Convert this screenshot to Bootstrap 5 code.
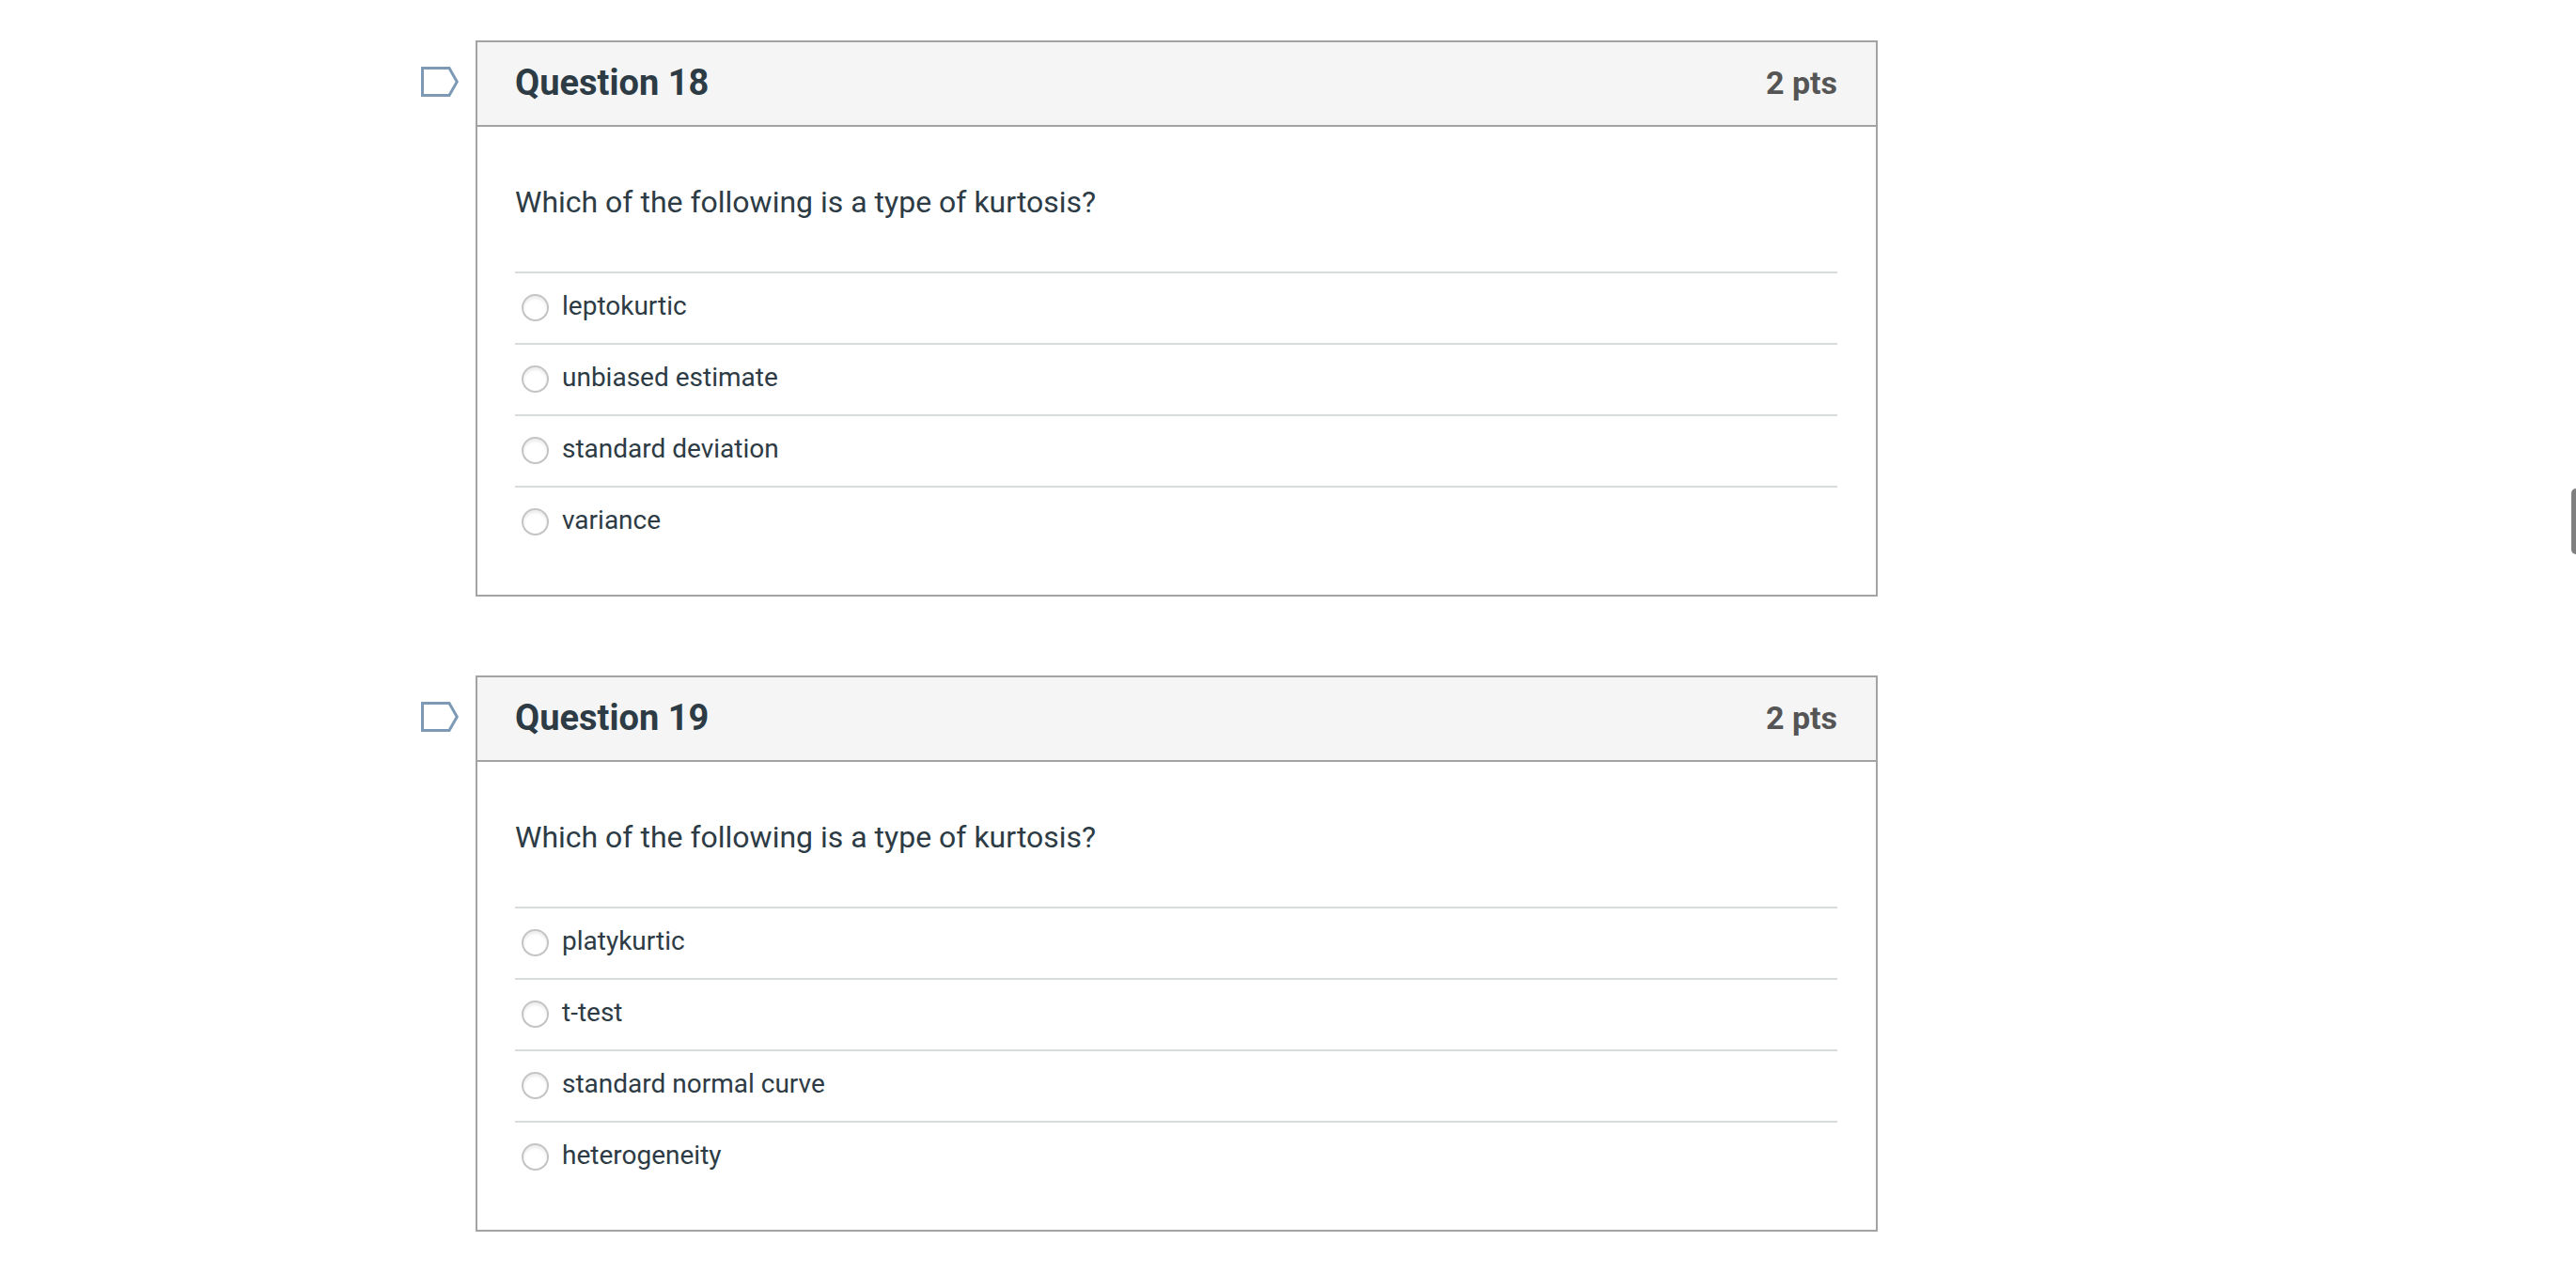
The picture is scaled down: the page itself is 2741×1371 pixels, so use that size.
<!DOCTYPE html>
<html lang="en">
<head>
    <meta charset="UTF-8">
    <meta name="viewport" content="width=device-width, initial-scale=1.0">
    <title>Quiz</title>
    <link rel="stylesheet" href="https://cdn.jsdelivr.net/npm/bootstrap@5.3.0/dist/css/bootstrap.min.css">
    <script defer src="https://cdn.jsdelivr.net/npm/bootstrap@5.3.0/dist/js/bootstrap.bundle.min.js"></script>
    <style>
        html, body {
            height: 100%;
            overflow: hidden;
        }
        body {
            background: #fff;
            color: #2d3b45;
            font-family: Roboto, "Liberation Sans", sans-serif;
        }
        .quiz-page {
            padding: 43px 0 0 448px;
            width: 1998px;
        }
        .quiz-item {
            margin-bottom: 84px;
        }
        .flag-icon {
            flex: 0 0 40px;
            width: 40px;
            height: 34px;
            margin: 27px 18px 0 0;
        }
        .quiz-box {
            height: 592px;
            border: 2px solid #a3a3a3;
            border-radius: 0;
        }
        .quiz-head {
            height: 90px;
            padding: 0 41px 0 40px;
            background: #f5f5f5;
            border-bottom: 2px solid #a3a3a3;
        }
        .quiz-title {
            font-size: 38px;
            font-weight: 700;
            margin: 0;
        }
        .quiz-pts {
            font-size: 34px;
            font-weight: 700;
            color: #555;
            padding-bottom: 2px;
        }
        .quiz-body {
            padding: 57px 41px 0 40px;
        }
        .quiz-text {
            font-size: 32px;
            line-height: 46px;
            margin: 0 0 51px;
        }
        .quiz-answer {
            height: 76px;
            padding: 0 0 5px 7px;
            margin: 0;
            font-size: 28px;
            border-top: 2px solid #d9dcdd;
        }
        .quiz-radio {
            appearance: none;
            flex: none;
            width: 29px;
            height: 29px;
            margin: 4px 14px 0 0;
            border: 2px solid #c4c4c4;
            border-radius: 50%;
            background: #fff;
            box-shadow: inset 0 3px 3px rgba(0, 0, 0, 0.07);
        }
        .scroll-thumb {
            position: fixed;
            top: 520px;
            right: 0;
            width: 5px;
            height: 70px;
            background: #808080;
            border-radius: 7px 0 0 7px;
        }
    </style>
</head>
<body>
    <div class="quiz-page">
        <div class="quiz-item d-flex">
            <svg class="flag-icon" viewBox="0 0 40 34" fill="#fff" stroke="#7c9ab5" stroke-width="3"><path d="M1.5 2.5H30L38.3 17L30 31.5H1.5Z"/></svg>
            <div class="card quiz-box flex-grow-1">
                <div class="quiz-head d-flex justify-content-between align-items-center">
                    <h2 class="quiz-title">Question 18</h2>
                    <span class="quiz-pts">2 pts</span>
                </div>
                <div class="quiz-body">
                    <p class="quiz-text">Which of the following is a type of kurtosis?</p>
                    <label class="quiz-answer d-flex align-items-center"><input class="quiz-radio" type="radio" name="q18"><span>leptokurtic</span></label>
                    <label class="quiz-answer d-flex align-items-center"><input class="quiz-radio" type="radio" name="q18"><span>unbiased estimate</span></label>
                    <label class="quiz-answer d-flex align-items-center"><input class="quiz-radio" type="radio" name="q18"><span>standard deviation</span></label>
                    <label class="quiz-answer d-flex align-items-center"><input class="quiz-radio" type="radio" name="q18"><span>variance</span></label>
                </div>
            </div>
        </div>
        <div class="quiz-item d-flex">
            <svg class="flag-icon" viewBox="0 0 40 34" fill="#fff" stroke="#7c9ab5" stroke-width="3"><path d="M1.5 2.5H30L38.3 17L30 31.5H1.5Z"/></svg>
            <div class="card quiz-box flex-grow-1">
                <div class="quiz-head d-flex justify-content-between align-items-center">
                    <h2 class="quiz-title">Question 19</h2>
                    <span class="quiz-pts">2 pts</span>
                </div>
                <div class="quiz-body">
                    <p class="quiz-text">Which of the following is a type of kurtosis?</p>
                    <label class="quiz-answer d-flex align-items-center"><input class="quiz-radio" type="radio" name="q19"><span>platykurtic</span></label>
                    <label class="quiz-answer d-flex align-items-center"><input class="quiz-radio" type="radio" name="q19"><span>t-test</span></label>
                    <label class="quiz-answer d-flex align-items-center"><input class="quiz-radio" type="radio" name="q19"><span>standard normal curve</span></label>
                    <label class="quiz-answer d-flex align-items-center"><input class="quiz-radio" type="radio" name="q19"><span>heterogeneity</span></label>
                </div>
            </div>
        </div>
    </div>
    <div class="scroll-thumb"></div>
</body>
</html>
